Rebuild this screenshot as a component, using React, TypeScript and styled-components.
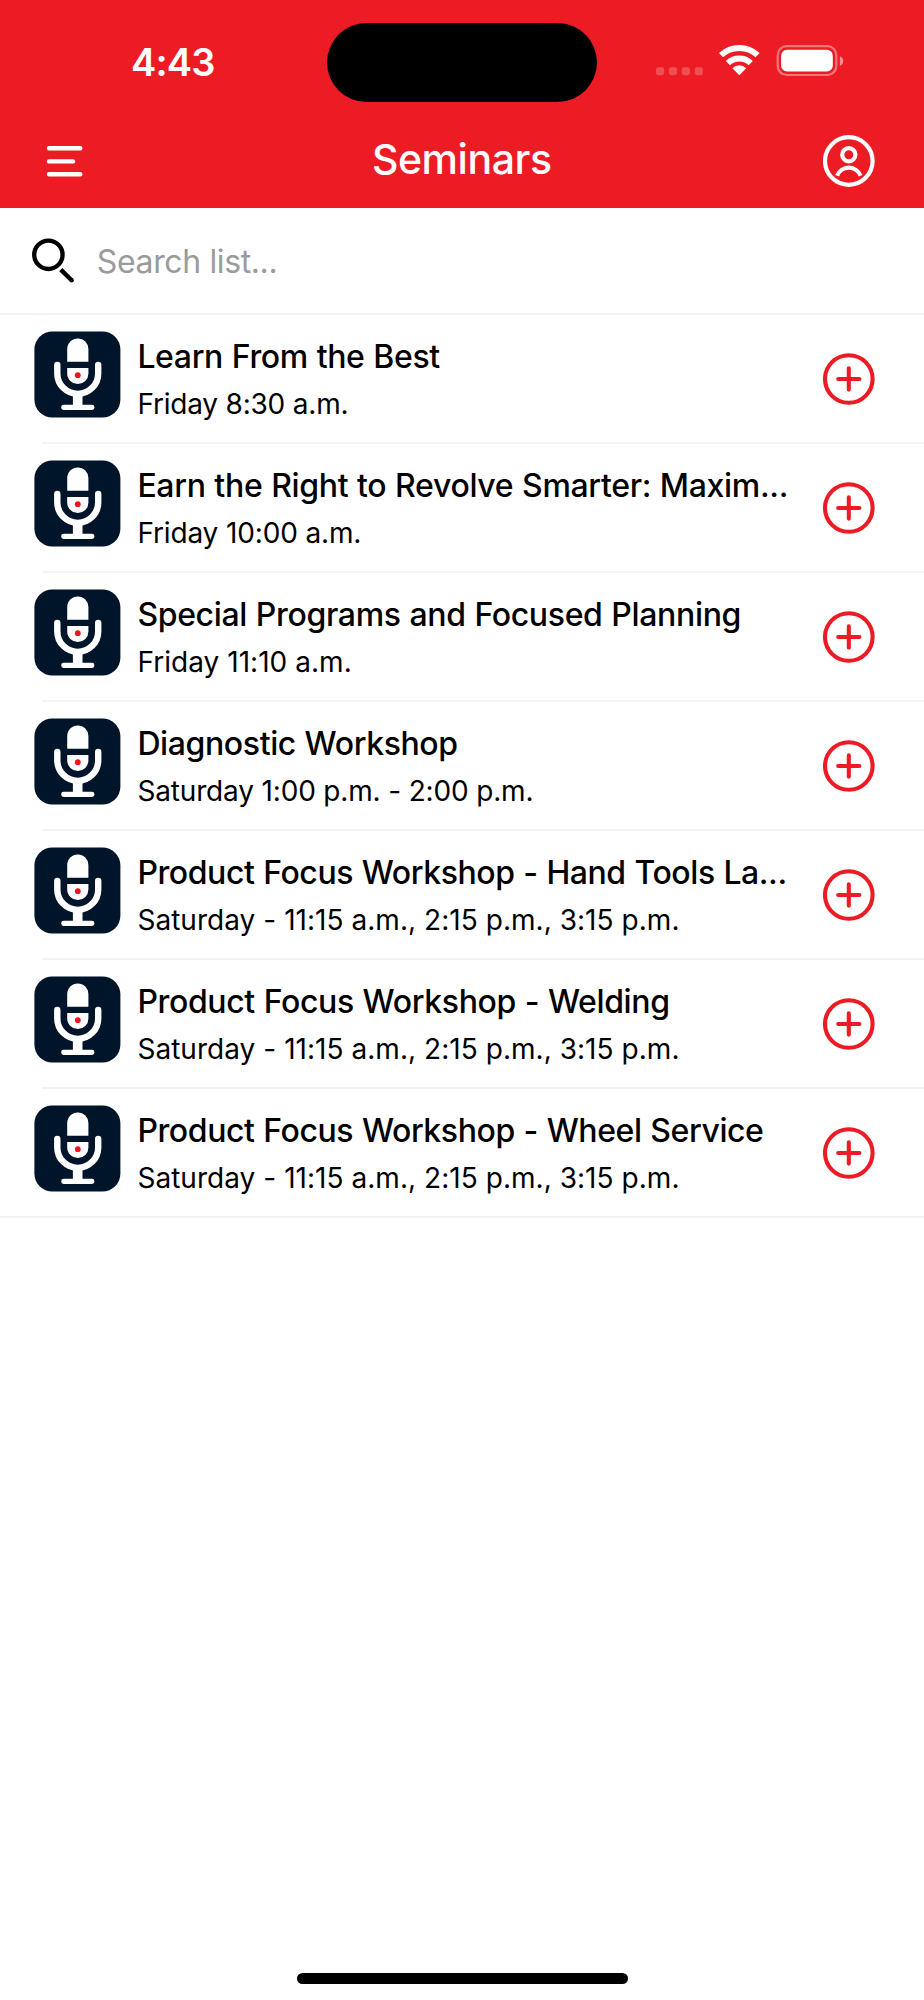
import React from 'react';
import styled, { createGlobalStyle } from 'styled-components';

const RED = '#ed1c24';
const NAVY = '#001529';

const GlobalStyle = createGlobalStyle`
  *, *::before, *::after { box-sizing: border-box; }
  body {
    margin: 0;
    background: #fff;
    font-family: Inter, "Liberation Sans", sans-serif;
    color: #000;
  }
  svg { display: block; flex: none; }
`;

const Screen = styled.div`
  display: flex;
  flex-direction: column;
  width: 924px;
  height: 2000px;
  background: #fff;
  overflow: hidden;
`;

const Header = styled.header`
  height: 208px;
  flex: none;
  background: ${RED};
  color: #fff;
`;

const StatusBar = styled.div`
  display: grid;
  grid-template-columns: 327px 270px 327px;
  align-items: center;
  height: 124px;
`;

const Clock = styled.time`
  padding-left: 131px;
  font-size: 38px;
  font-weight: 600;
  line-height: 46px;
  letter-spacing: -0.8px;
`;

const Island = styled.div`
  height: 79px;
  border-radius: 40px;
  background: #000;
`;

const StatusIcons = styled.svg`
  margin-left: 53px;
`;

const NavBar = styled.nav`
  display: grid;
  grid-template-columns: 52px 1fr 52px;
  padding: 11px 49px 0 39px;
`;

const IconButton = styled.button`
  display: block;
  width: 52px;
  height: 52px;
  padding: 0;
  border: 0;
  background: none;
  color: inherit;
`;

const ScreenTitle = styled.h1`
  margin: 0;
  padding-left: 9.5px;
  text-align: center;
  font-size: 41px;
  font-weight: 500;
  line-height: 49px;
  letter-spacing: -0.44px;
`;

const SearchBar = styled.label`
  display: flex;
  align-items: center;
  flex: none;
  height: 105px;
  padding-left: 30px;
  gap: 14.8px;
`;

const SearchInput = styled.input`
  flex: 1;
  min-width: 0;
  padding: 2px 0 0;
  border: 0;
  outline: 0;
  background: none;
  font: 400 32px/40px Inter, "Liberation Sans", sans-serif;
  letter-spacing: -0.37px;
  &::placeholder { color: #9b9b9b; opacity: 1; }
`;

const List = styled.ul`
  margin: 0;
  padding: 0;
  list-style: none;
`;

const Separator = styled.div<{ $inset?: boolean }>`
  height: 2px;
  flex: none;
  margin-left: ${(p) => (p.$inset ? '42px' : '0')};
  background: #f3f3f3;
`;

const Row = styled.div`
  display: flex;
  align-items: flex-start;
  height: 127px;
  padding: 16px 49px 0 34px;
`;

const RowText = styled.div`
  flex: 1;
  min-width: 0;
  padding: 6px 0 0 16.4px;
  white-space: nowrap;
`;

const RowTitle = styled.div<{ $tracking: number }>`
  font-size: 32px;
  font-weight: 500;
  line-height: 40px;
  letter-spacing: ${(p) => p.$tracking}px;
  word-spacing: 0.6px;
`;

const RowTime = styled.div<{ $tracking: number }>`
  margin-top: 10px;
  font-size: 28px;
  line-height: 34px;
  letter-spacing: ${(p) => p.$tracking}px;
`;

const AddButton = styled(IconButton)`
  flex: none;
  margin-top: 22px;
  color: ${RED};
`;

const HomeIndicator = styled.div`
  width: 331px;
  height: 11px;
  margin: auto auto 16px;
  border-radius: 6px;
  background: #000;
`;

const MenuIcon = () => (
  <svg width="52" height="52" viewBox="0 0 52 52" stroke="currentColor" strokeWidth="4.4" strokeLinecap="round">
    <path d="M10 13.3H41.3M10 26.4H34M10 39.3H41.3" />
  </svg>
);

const ProfileIcon = () => (
  <svg width="52" height="52" viewBox="0.2 0 52 52" fill="none" stroke="currentColor" strokeWidth="4.2">
    <circle cx="26" cy="26" r="23.8" />
    <circle cx="26" cy="19.7" r="6.6" />
    <path d="M14.3 40.8A12.5 12.5 0 0 1 37.7 40.8" />
  </svg>
);

const AddIcon = () => (
  <svg width="52" height="52" viewBox="0.2 0 52 52" fill="none" stroke="currentColor" strokeWidth="4.1">
    <circle cx="26" cy="26" r="23.8" />
    <path d="M26 15.4V36.6M15.4 26H36.6" strokeLinecap="round" />
  </svg>
);

const SearchIcon = () => (
  <svg width="52" height="52" viewBox="0 0 52 52" fill="none" stroke="#000" strokeWidth="4.3">
    <circle cx="18.4" cy="19.8" r="14.2" />
    <path d="M30.8 34.6L41.6 45.2" strokeWidth="4.4" />
    <circle cx="41.6" cy="45.2" r="2.2" fill="#000" stroke="none" />
  </svg>
);

const MicIcon = () => (
  <svg width="87" height="87" viewBox="-0.4 -0.5 87 87">
    <rect width="86" height="86" rx="18" fill={NAVY} />
    <path d="M32.8 30.3V17.6a10.6 10.6 0 0 1 21.2 0V30.3Z" fill="#fff" />
    <path d="M32.8 36.5H54V41.9a10.6 10.6 0 0 1-21.2 0Z" fill="#fff" />
    <circle cx="43.4" cy="43.7" r="2.9" fill="#f5121d" />
    <path d="M22.9 33.5V41.9a20.45 20.45 0 0 0 40.9 0V33.5" fill="none" stroke="#fff" strokeWidth="6.4" strokeLinecap="round" />
    <rect x="38.5" y="62" width="9.6" height="14" fill="#fff" />
    <rect x="26.8" y="73.3" width="33.2" height="5.2" rx="2.4" fill="#fff" />
  </svg>
);

const SystemIcons = () => (
  <StatusIcons width="200" height="44" viewBox="0 0 200 44">
    <g fill="#fff" fillOpacity=".22">
      {[6, 18.9, 31.8, 44.7].map((x) => (
        <rect key={x} x={x} y="27.2" width="8.2" height="8" rx="2.4" />
      ))}
    </g>
    <g fill="none" stroke="#fff" strokeWidth="6.1">
      <path d="M71.02 15.13A27 27 0 0 1 107.58 15.13" />
      <path d="M77.9 23.1A16.5 16.5 0 0 1 100.7 23.1" />
    </g>
    <path d="M82.4 28.2A9.8 9.8 0 0 1 96.2 28.2L90.3 34.3Q89.3 35.3 88.3 34.3Z" fill="#fff" />
    <rect x="127.7" y="6.2" width="58.6" height="28.8" rx="9" fill="none" stroke="#fff" strokeOpacity=".4" strokeWidth="2.2" />
    <rect x="131.1" y="9.8" width="51.7" height="21.6" rx="6" fill="#fff" />
    <path d="M189.8 16.3c4.6 1.7 4.6 8 0 9.7Z" fill="#fff" fillOpacity=".5" />
  </StatusIcons>
);

interface Seminar {
  title: string;
  time: string;
  titleTracking: number;
  timeTracking: number;
}

const seminars: Seminar[] = [
  { title: 'Learn From the Best', time: 'Friday 8:30 a.m.', titleTracking: -0.36, timeTracking: -0.2 },
  { title: 'Earn the Right to Revolve Smarter: Maxim...', time: 'Friday 10:00 a.m.', titleTracking: -0.33, timeTracking: -0.14 },
  { title: 'Special Programs and Focused Planning', time: 'Friday 11:10 a.m.', titleTracking: -0.34, timeTracking: 0.04 },
  { title: 'Diagnostic Workshop', time: 'Saturday 1:00 p.m. - 2:00 p.m.', titleTracking: -0.39, timeTracking: -0.16 },
  { title: 'Product Focus Workshop - Hand Tools La...', time: 'Saturday - 11:15 a.m., 2:15 p.m., 3:15 p.m.', titleTracking: -0.42, timeTracking: 0.04 },
  { title: 'Product Focus Workshop - Welding', time: 'Saturday - 11:15 a.m., 2:15 p.m., 3:15 p.m.', titleTracking: -0.36, timeTracking: 0.04 },
  { title: 'Product Focus Workshop - Wheel Service', time: 'Saturday - 11:15 a.m., 2:15 p.m., 3:15 p.m.', titleTracking: -0.41, timeTracking: 0.04 },
];

export default function App() {
  return (
    <Screen>
      <GlobalStyle />
      <Header>
        <StatusBar>
          <Clock>4:43</Clock>
          <Island />
          <SystemIcons />
        </StatusBar>
        <NavBar>
          <IconButton aria-label="Menu"><MenuIcon /></IconButton>
          <ScreenTitle>Seminars</ScreenTitle>
          <IconButton aria-label="Profile"><ProfileIcon /></IconButton>
        </NavBar>
      </Header>
      <SearchBar>
        <SearchIcon />
        <SearchInput placeholder="Search list..." />
      </SearchBar>
      <Separator />
      <List>
        {seminars.map((s, i) => (
          <li key={s.title}>
            <Row>
              <MicIcon />
              <RowText>
                <RowTitle $tracking={s.titleTracking}>{s.title}</RowTitle>
                <RowTime $tracking={s.timeTracking}>{s.time}</RowTime>
              </RowText>
              <AddButton aria-label={`Add ${s.title}`}><AddIcon /></AddButton>
            </Row>
            <Separator $inset={i < seminars.length - 1} />
          </li>
        ))}
      </List>
      <HomeIndicator />
    </Screen>
  );
}
